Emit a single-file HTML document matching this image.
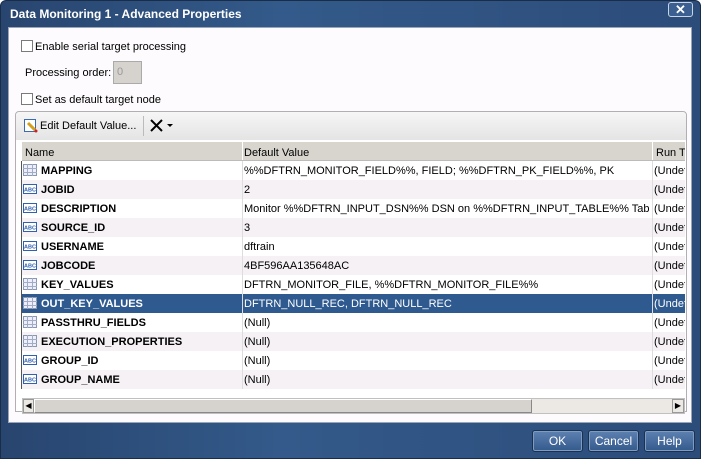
<!DOCTYPE html>
<html><head><style>
*{margin:0;padding:0;box-sizing:border-box}
body{width:701px;height:459px;overflow:hidden;font-family:"Liberation Sans",sans-serif;font-size:11px;background:#fff;position:relative}
.win{position:absolute;left:0;top:0;width:701px;height:459px;background:linear-gradient(90deg,#28456f,#335a8a 40%,#2c4c7a);border:1px solid #1a2d48;border-radius:6px 6px 0 0}
.title{position:absolute;left:9px;top:6px;color:#fff;font-weight:bold;font-size:12px}
.close{position:absolute;left:667px;top:1px;width:25px;height:15px;border:1px solid #c8d4e4;border-radius:3px;background:#3a5f90;color:#fff;font-weight:bold;text-align:center;line-height:13px;font-size:13px}
.panel{position:absolute;left:8px;top:27px;width:684px;height:396px;background:#fdfbfd;border:1px solid #9aa6b8}
.abs{position:absolute}
.cb{position:absolute;width:12px;height:12px;border:1px solid #7a7a7a;background:#fff}
.lbl{position:absolute;font-size:11px;color:#000;white-space:nowrap}
.grid{position:absolute;left:15px;top:111px;width:672px;height:301px;border:1px solid #b0b0b0;border-radius:4px 4px 0 0;background:#fff}
.tb{position:absolute;left:0;top:0;width:670px;height:28px;background:linear-gradient(#f6f6f6,#e4e4e4);border-radius:4px 4px 0 0}
.hdr{position:absolute;left:6px;top:30px;width:663px;height:19px;background:#d8d5cf;border-bottom:1px solid #bbb;overflow:hidden}
.hdr span{position:absolute;top:5px;white-space:nowrap}
.row{position:absolute;left:6px;width:663px;height:19px}
.row.alt{background:#f5f1f5}
.row.sel{background:#2f5a8f;color:#fff}
.row span{position:absolute;top:4px;white-space:nowrap;overflow:hidden}
.n{left:19px;font-weight:bold;width:200px}
.d{left:222px;width:405px}
.r{left:632px;width:31px}
.sep1{position:absolute;left:220px;top:0;width:1px;height:19px;background:#ddd}
.sep2{position:absolute;left:630px;top:0;width:1px;height:19px;background:#ddd}
.ic{position:absolute;left:1px;top:3px;width:14px;height:12px}
.btn{position:absolute;top:430px;width:51px;height:22px;border:1px solid #1c304f;border-radius:3px;background:linear-gradient(#5d82b2,#34598b);color:#fff;text-align:center;line-height:20px;font-size:12px;box-shadow:inset 0 0 0 1px #7d9cc4}
</style></head><body>
<div class="win">
<div class="title">Data Monitoring 1 - Advanced Properties</div>
<div class="close">✕</div>
</div>
<div class="panel"></div>
<div class="cb" style="left:21px;top:40px"></div><div class="lbl" style="left:35px;top:41px">Enable serial target processing</div>
<div class="lbl" style="left:25px;top:67px">Processing order:</div>
<div class="abs" style="left:113px;top:61px;width:29px;height:23px;border:1px solid #aaa;background:#d6d3ce;color:#999;padding:4px 3px">0</div>
<div class="cb" style="left:21px;top:93px"></div><div class="lbl" style="left:35px;top:94px">Set as default target node</div>
<div class="grid">
<div class="tb">
<svg class="abs" style="left:8px;top:7px" width="14" height="14"><rect x="0.5" y="0.5" width="11" height="12" fill="#fff" stroke="#3a6ab0"/><path d="M4 4 L11 11" stroke="#d4a020" stroke-width="3"/><circle cx="12" cy="12" r="1.5" fill="#d02020"/></svg>
<div class="lbl" style="left:24px;top:8px">Edit Default Value...</div>
<div class="abs" style="left:127px;top:4px;width:1px;height:20px;background:#bbb"></div>
<svg class="abs" style="left:133px;top:6px" width="30" height="16"><path d="M2 2 L13 13 M13 2 L2 13" stroke="#000" stroke-width="2"/><path d="M18 6 L24 6 L21 9 Z" fill="#000"/></svg>
</div>
<div class="hdr"><span style="left:3px">Name</span><span style="left:222px">Default Value</span><span style="left:634px">Run Ti</span><div class="abs" style="left:220px;top:0;width:1px;height:19px;background:#fff"></div><div class="abs" style="left:630px;top:0;width:1px;height:19px;background:#fff"></div></div>
<div class="abs" style="left:5px;top:49px;width:1px;height:228px;background:#555"></div>
<div id="rows"></div>
<div class="abs" style="left:6px;top:286px;width:663px;height:16px;background:#ece9e4;border:1px solid #c0c0c0"></div>
<div class="abs" style="left:7px;top:287px;width:11px;height:14px;background:#ece9e4;border:1px solid #999;font-size:8px;text-align:center;line-height:12px">◀</div>
<div class="abs" style="left:18px;top:287px;width:498px;height:14px;background:#d6d3ce;border:1px solid #888;border-top-color:#fff;border-left-color:#fff"></div>
<div class="abs" style="left:656px;top:287px;width:12px;height:14px;background:#ece9e4;border:1px solid #999;font-size:8px;text-align:center;line-height:12px">▶</div>
</div>
<div class="btn" style="left:532px">OK</div>
<div class="btn" style="left:588px">Cancel</div>
<div class="btn" style="left:644px">Help</div>
<script>
var T='<svg class="ic" viewBox="0 0 14 12"><rect x="0.5" y="0.5" width="13" height="11" fill="#eef" stroke="#8898b0"/><path d="M0 4.5H14M0 8.5H14M4.5 0V12M9.5 0V12" stroke="#a0aec4"/></svg>';
var A='<svg class="ic" viewBox="0 0 14 12"><rect x="0.5" y="1.5" width="13" height="9" fill="#fff" stroke="#3060b0"/><text x="7" y="8.5" font-size="5.5" text-anchor="middle" fill="#3060b0" font-family="Liberation Sans" font-weight="bold">ABC</text></svg>';
var d=[[T,'MAPPING','%%DFTRN_MONITOR_FIELD%%, FIELD; %%DFTRN_PK_FIELD%%, PK'],[A,'JOBID','2'],[A,'DESCRIPTION','Monitor %%DFTRN_INPUT_DSN%% DSN on %%DFTRN_INPUT_TABLE%% Table'],[A,'SOURCE_ID','3'],[A,'USERNAME','dftrain'],[A,'JOBCODE','4BF596AA135648AC'],[T,'KEY_VALUES','DFTRN_MONITOR_FILE, %%DFTRN_MONITOR_FILE%%'],[T,'OUT_KEY_VALUES','DFTRN_NULL_REC, DFTRN_NULL_REC'],[T,'PASSTHRU_FIELDS','(Null)'],[T,'EXECUTION_PROPERTIES','(Null)'],[A,'GROUP_ID','(Null)'],[A,'GROUP_NAME','(Null)']];
var h='';d.forEach(function(r,i){var c='row'+(i==7?' sel':(i%2?' alt':''));h+='<div class="'+c+'" style="top:'+(49+i*19)+'px">'+r[0]+'<span class="n">'+r[1]+'</span><span class="d">'+r[2]+'</span><span class="r">(Undef</span><div class="sep1"></div><div class="sep2"></div></div>';});
document.getElementById('rows').innerHTML=h;
</script>
</body></html>
